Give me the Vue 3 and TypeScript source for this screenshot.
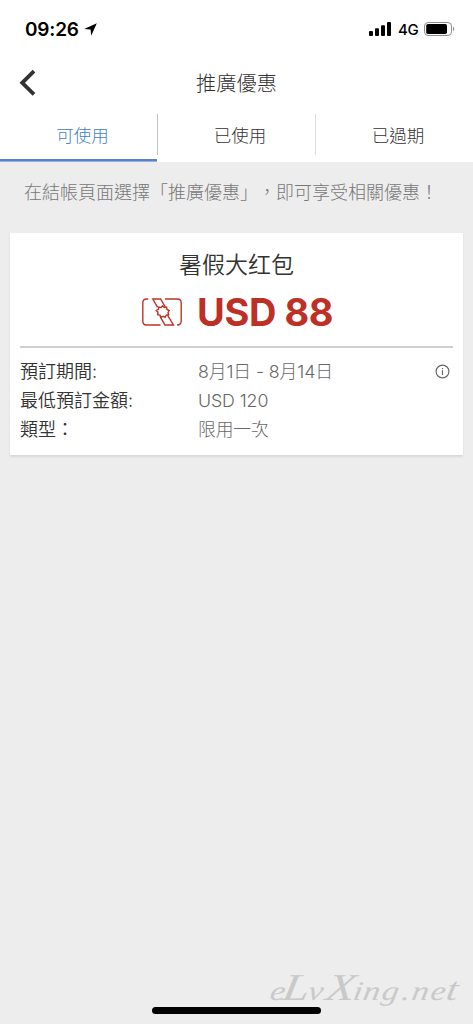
<script setup lang="ts">
import { ref } from 'vue'

interface Detail {
  label: string
  value: string
  info?: boolean
}

const tabs: string[] = ['可使用', '已使用', '已過期']
const activeTab = ref(0)

const details: Detail[] = [
  { label: '預訂期間:', value: '8月1日 - 8月14日', info: true },
  { label: '最低預訂金額:', value: 'USD 120' },
  { label: '類型：', value: '限用一次' },
]
</script>

<template>
  <div class="screen">
    <div class="status">
      <span class="time">09:26</span>
      <svg class="location" width="13" height="13" viewBox="0 0 13 13">
        <path d="M12.8 .2 7.2 12.8 6.6 6.5 .2 6Z" fill="#000" />
      </svg>
      <span class="grow"></span>
      <svg class="signal" width="22" height="14" viewBox="0 0 22 14">
        <rect x="0" y="9" width="4" height="5" rx="1" />
        <rect x="6" y="6.3" width="4" height="7.7" rx="1" />
        <rect x="12" y="3.3" width="4" height="10.7" rx="1" />
        <rect x="18" y="0" width="4" height="14" rx="1" />
      </svg>
      <span class="network">4G</span>
      <svg class="battery" width="31" height="14" viewBox="0 0 31 14">
        <rect x=".5" y=".5" width="27" height="13" rx="3.6" fill="none" stroke="#8c8c8c" />
        <rect x="2.2" y="2" width="20.8" height="10" rx="1.8" fill="#000" />
        <path d="M29 4.8c1.6.5 1.6 3.9 0 4.4Z" fill="#8c8c8c" />
      </svg>
    </div>

    <header class="header">
      <svg class="back" width="18" height="28" viewBox="0 0 18 28">
        <path d="M15 2.2 3.2 13.8 15 25.4" fill="none" stroke="#333" stroke-width="3.8" />
      </svg>
      <h1>推廣優惠</h1>
    </header>

    <nav class="tabs">
      <button
        v-for="(tab, i) in tabs"
        :key="tab"
        class="tab"
        :class="{ active: i === activeTab }"
        @click="activeTab = i"
      >
        {{ tab }}
      </button>
    </nav>

    <main class="content">
      <p class="notice">在結帳頁面選擇「推廣優惠」，即可享受相關優惠！</p>
      <section class="card">
        <h2>暑假大红包</h2>
        <div class="amount">
          <svg width="40" height="28" viewBox="0 0 40 28" fill="none" stroke="#bd3327" stroke-width="1.4">
            <path d="M6.2 1H4.5Q.8 1 .8 5V23Q.8 27 4.5 27H18.5" />
            <path d="M23 1H35.5Q39.2 1 39.2 5V23Q39.2 27 35 27" />
            <path d="M15.6 9.4 10.8 1H18.6L23.3 9M18 18.4 23 27H31.5L25.6 17.4" />
            <path d="M20.7 7.8 22.3 9.6 24.6 9.1 25 11.5 27.2 12.6 26 14.5 26.7 16.8 24.3 17.2 23.2 19.4 21.2 18.3 19 19.3 18 17.1 15.6 16.6 16 14.2 14.3 12.5 16.4 11.4 16.8 9 19.1 9.5Z" />
          </svg>
          <strong>USD 88</strong>
        </div>
        <dl class="details">
          <div v-for="row in details" :key="row.label" class="row">
            <dt>{{ row.label }}</dt>
            <dd>{{ row.value }}</dd>
            <svg v-if="row.info" class="info" width="15" height="15" viewBox="0 0 15 15">
              <circle cx="7.5" cy="7.5" r="6.4" fill="none" stroke="#686868" stroke-width="1.2" />
              <path d="M7.5 6.3V11M7.5 4V5.3" stroke="#686868" stroke-width="1.2" />
            </svg>
          </div>
        </dl>
      </section>
    </main>

    <svg class="watermark" width="211" height="56" viewBox="0 0 211 56">
      <text transform="translate(0 36) skewX(-10) scale(1.25 1)">
        <tspan x="5.6">e</tspan><tspan class="cap" x="15.5">L</tspan><tspan x="36">v</tspan><tspan class="cap" x="50">X</tspan><tspan x="72 80 95 111 119 134">ing.ne</tspan><tspan class="tail" x="146.5">t</tspan>
      </text>
    </svg>
    <div class="home"></div>
  </div>
</template>

<style>
body {
  margin: 0;
}
</style>

<style scoped>
.screen {
  position: relative;
  width: 473px;
  height: 1024px;
  box-sizing: border-box;
  overflow: hidden;
  display: flex;
  flex-direction: column;
  background: #fff;
  color: #333;
  font-family: Inter, 'Noto Sans CJK TC', sans-serif;
}
.status {
  height: 58px;
  flex: none;
  box-sizing: border-box;
  padding: 0 18px 0 25px;
  display: flex;
  align-items: center;
  color: #000;
}
.time {
  width: 54px;
  font-size: 19px;
  font-weight: 600;
  letter-spacing: -0.2px;
  white-space: nowrap;
}
.location {
  margin-left: 5px;
}
.grow {
  flex: 1;
}
.network {
  width: 20px;
  margin: 0 6px 0 7px;
  font-size: 15px;
  font-weight: 500;
  letter-spacing: -0.4px;
}
.signal {
  margin-right: 0;
}
.header {
  position: relative;
  height: 56px;
  flex: none;
  box-sizing: border-box;
  padding-bottom: 4px;
  display: flex;
  align-items: center;
  justify-content: center;
}
.back {
  position: absolute;
  left: 19px;
  top: 11px;
}
h1 {
  margin: 0;
  font-size: 20.2px;
  line-height: 30px;
  font-weight: 300;
}
.tabs {
  height: 48px;
  flex: none;
  display: grid;
  grid-template-columns: 157px 158px 158px;
}
.tab {
  position: relative;
  padding: 0 0 4px 8px;
  border: 0;
  background: none;
  color: #333;
  font: 300 17.5px/26px Inter, 'Noto Sans CJK TC', sans-serif;
}
.tab + .tab::before {
  content: '';
  position: absolute;
  left: 0;
  top: 0;
  width: 1px;
  height: 41px;
  background: #c2c2c2;
}
.tab:last-child::before {
  background: #ddd;
}
.tab.active {
  color: #3f83bf;
}
.tab.active::after {
  content: '';
  position: absolute;
  left: 0;
  right: 0;
  bottom: 1px;
  height: 2px;
  background: #5c7fc8;
  border-bottom: 1px solid #8fb0ea;
  margin-bottom: -1px;
}
.content {
  flex: 1;
  background: #ededed;
}
.notice {
  margin: 0;
  padding: 18px 0 0 24px;
  height: 53px;
  font-size: 18px;
  line-height: 26px;
  font-weight: 300;
  color: #777;
  white-space: nowrap;
  text-spacing-trim: space-all;
  font-kerning: none;
}
.card {
  margin: 0 10px;
  height: 222px;
  box-sizing: border-box;
  padding: 15px 10px 0;
  background: #fff;
  box-shadow: 0 2px 2px #d8d8d8;
}
h2 {
  margin: 0;
  text-align: center;
  font: 350 23px/34px Inter, 'Noto Sans CJK SC', sans-serif;
}
.amount {
  height: 66px;
  box-sizing: border-box;
  padding: 0 0 5px 122px;
  display: flex;
  align-items: center;
  gap: 15px;
  border-bottom: 2px solid #d0d0d0;
}
.amount strong {
  font-size: 38px;
  line-height: 44px;
  font-weight: 700;
  letter-spacing: -0.4px;
  color: #bd3025;
  white-space: nowrap;
}
.details {
  margin: 9px 0 0;
}
.row {
  display: flex;
  align-items: center;
  height: 29px;
  font-size: 18px;
  line-height: 29px;
  white-space: nowrap;
}
dt {
  width: 178px;
  font-weight: 350;
}
dd {
  margin: 0;
  flex: 1;
  font-size: 17.8px;
  font-weight: 300;
  letter-spacing: -0.1px;
  color: #686868;
}
.info {
  margin-right: 3px;
}
.watermark {
  position: absolute;
  left: 262px;
  top: 964px;
}
.watermark text {
  font: italic 27px 'Liberation Serif', serif;
  fill: #c9c9c9;
}
.watermark .cap {
  font-size: 38px;
}
.watermark .tail {
  font-size: 33px;
}
.home {
  position: absolute;
  left: 152px;
  top: 1007px;
  width: 169px;
  height: 7px;
  border-radius: 4px;
  background: #000;
}
</style>
